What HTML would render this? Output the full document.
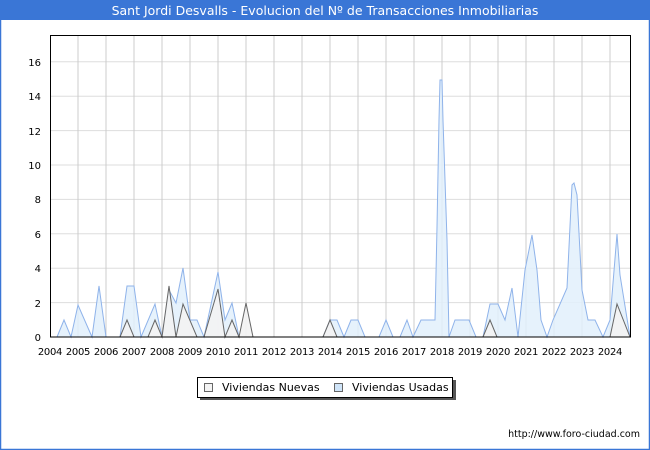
<!DOCTYPE html>
<html><head><meta charset="utf-8"><style>
html,body{margin:0;padding:0;background:#fff}
svg{display:block}
text{font-family:"DejaVu Sans","Liberation Sans",sans-serif}
</style></head><body>
<svg width="650" height="450" viewBox="0 0 650 450" xmlns="http://www.w3.org/2000/svg">
<rect x="0.5" y="0.5" width="649" height="449" fill="#fff" stroke="#3a76d6" stroke-width="1.5"/>
<rect x="0" y="0" width="650" height="20" fill="#3a76d6"/>
<text x="325" y="15" text-anchor="middle" font-size="12.5" fill="#fff">Sant Jordi Desvalls - Evolucion del Nº de Transacciones Inmobiliarias</text>
<g stroke="#dddddd" stroke-width="1">
<line x1="50" x2="630" y1="302.6" y2="302.6"/><line x1="50" x2="630" y1="268.2" y2="268.2"/>
<line x1="50" x2="630" y1="233.8" y2="233.8"/><line x1="50" x2="630" y1="199.4" y2="199.4"/>
<line x1="50" x2="630" y1="165" y2="165"/><line x1="50" x2="630" y1="130.6" y2="130.6"/>
<line x1="50" x2="630" y1="96.2" y2="96.2"/><line x1="50" x2="630" y1="61.8" y2="61.8"/>
</g>
<g stroke="#cccccc" stroke-width="1">
<line x1="78" x2="78" y1="36" y2="337"/><line x1="106" x2="106" y1="36" y2="337"/><line x1="134" x2="134" y1="36" y2="337"/><line x1="162" x2="162" y1="36" y2="337"/><line x1="190" x2="190" y1="36" y2="337"/><line x1="218" x2="218" y1="36" y2="337"/><line x1="246" x2="246" y1="36" y2="337"/><line x1="274" x2="274" y1="36" y2="337"/><line x1="302" x2="302" y1="36" y2="337"/><line x1="330" x2="330" y1="36" y2="337"/><line x1="358" x2="358" y1="36" y2="337"/><line x1="386" x2="386" y1="36" y2="337"/><line x1="414" x2="414" y1="36" y2="337"/><line x1="442" x2="442" y1="36" y2="337"/><line x1="470" x2="470" y1="36" y2="337"/><line x1="498" x2="498" y1="36" y2="337"/><line x1="526" x2="526" y1="36" y2="337"/><line x1="554" x2="554" y1="36" y2="337"/><line x1="582" x2="582" y1="36" y2="337"/><line x1="610" x2="610" y1="36" y2="337"/>
</g>
<polygon fill="#e2f0fc" fill-opacity="0.85" stroke="#8fb3ea" stroke-width="1" points="57,337 64,320 71,337 78,305 92,337 99,286 106,337 120,337 127,286 134,286 141,337 155,304 162,337 169,290 176,303 183,268 190,320 197,320 204,337 218,272 225,320 232,303 239,337 323,337 330,320 337,320 344,337 351,320 358,320 365,337 379,337 386,320 393,337 400,337 407,320 413,337 421,320 435,320 437,227 439,120 440,80 442,80 443,120 445,180 447,240 449,337 455,320 469,320 476,337 483,337 490,304 498,304 505,320 512,288 518,337 525,270 532,235 537,270 541,320 547,337 553,320 567,288 572,185 574,183 577,195 582,290 588,320 595,320 603,337 610,320 617,234 620,275 630,337"/>
<polygon fill="#f3f3f3" fill-opacity="0.9" stroke="#666" stroke-width="1" points="120,337 127,320 134,337 148,337 155,320 162,337 169,286 176,337 183,304 197,337 204,337 218,289 225,337 232,320 239,337 246,303 253,337 323,337 330,320 337,337 483,337 490,320 497,337 610,337 617,304 630,337"/>
<rect x="50.5" y="35.5" width="580" height="301.5" fill="none" stroke="#000" stroke-width="1"/>
<g font-size="10" fill="#000" text-anchor="end">
<text x="41" y="341">0</text><text x="41" y="307">2</text><text x="41" y="272">4</text><text x="41" y="238">6</text><text x="41" y="203">8</text><text x="41" y="169">10</text><text x="41" y="135">12</text><text x="41" y="100">14</text><text x="41" y="66">16</text>
</g>
<g font-size="10" fill="#000" text-anchor="middle" letter-spacing="-0.3">
<text x="50" y="355">2004</text><text x="78" y="355">2005</text><text x="106" y="355">2006</text><text x="134" y="355">2007</text><text x="162" y="355">2008</text><text x="190" y="355">2009</text><text x="218" y="355">2010</text><text x="246" y="355">2011</text><text x="274" y="355">2012</text><text x="302" y="355">2013</text><text x="330" y="355">2014</text><text x="358" y="355">2015</text><text x="386" y="355">2016</text><text x="414" y="355">2017</text><text x="442" y="355">2018</text><text x="470" y="355">2019</text><text x="498" y="355">2020</text><text x="526" y="355">2021</text><text x="554" y="355">2022</text><text x="582" y="355">2023</text><text x="610" y="355">2024</text>
</g>
<rect x="200" y="380" width="256" height="20" fill="#555"/>
<rect x="197.5" y="377.5" width="255" height="20" fill="#fff" stroke="#000" stroke-width="1"/>
<rect x="204.5" y="383.5" width="8" height="8" fill="#f3f3f3" stroke="#666"/>
<text x="222" y="391" font-size="11">Viviendas Nuevas</text>
<rect x="334.5" y="383.5" width="8" height="8" fill="#cfe4f8" stroke="#666"/>
<text x="352" y="391" font-size="11">Viviendas Usadas</text>
<text x="640" y="437" font-size="9.5" text-anchor="end" fill="#000">http://www.foro-ciudad.com</text>
</svg>
</body></html>
